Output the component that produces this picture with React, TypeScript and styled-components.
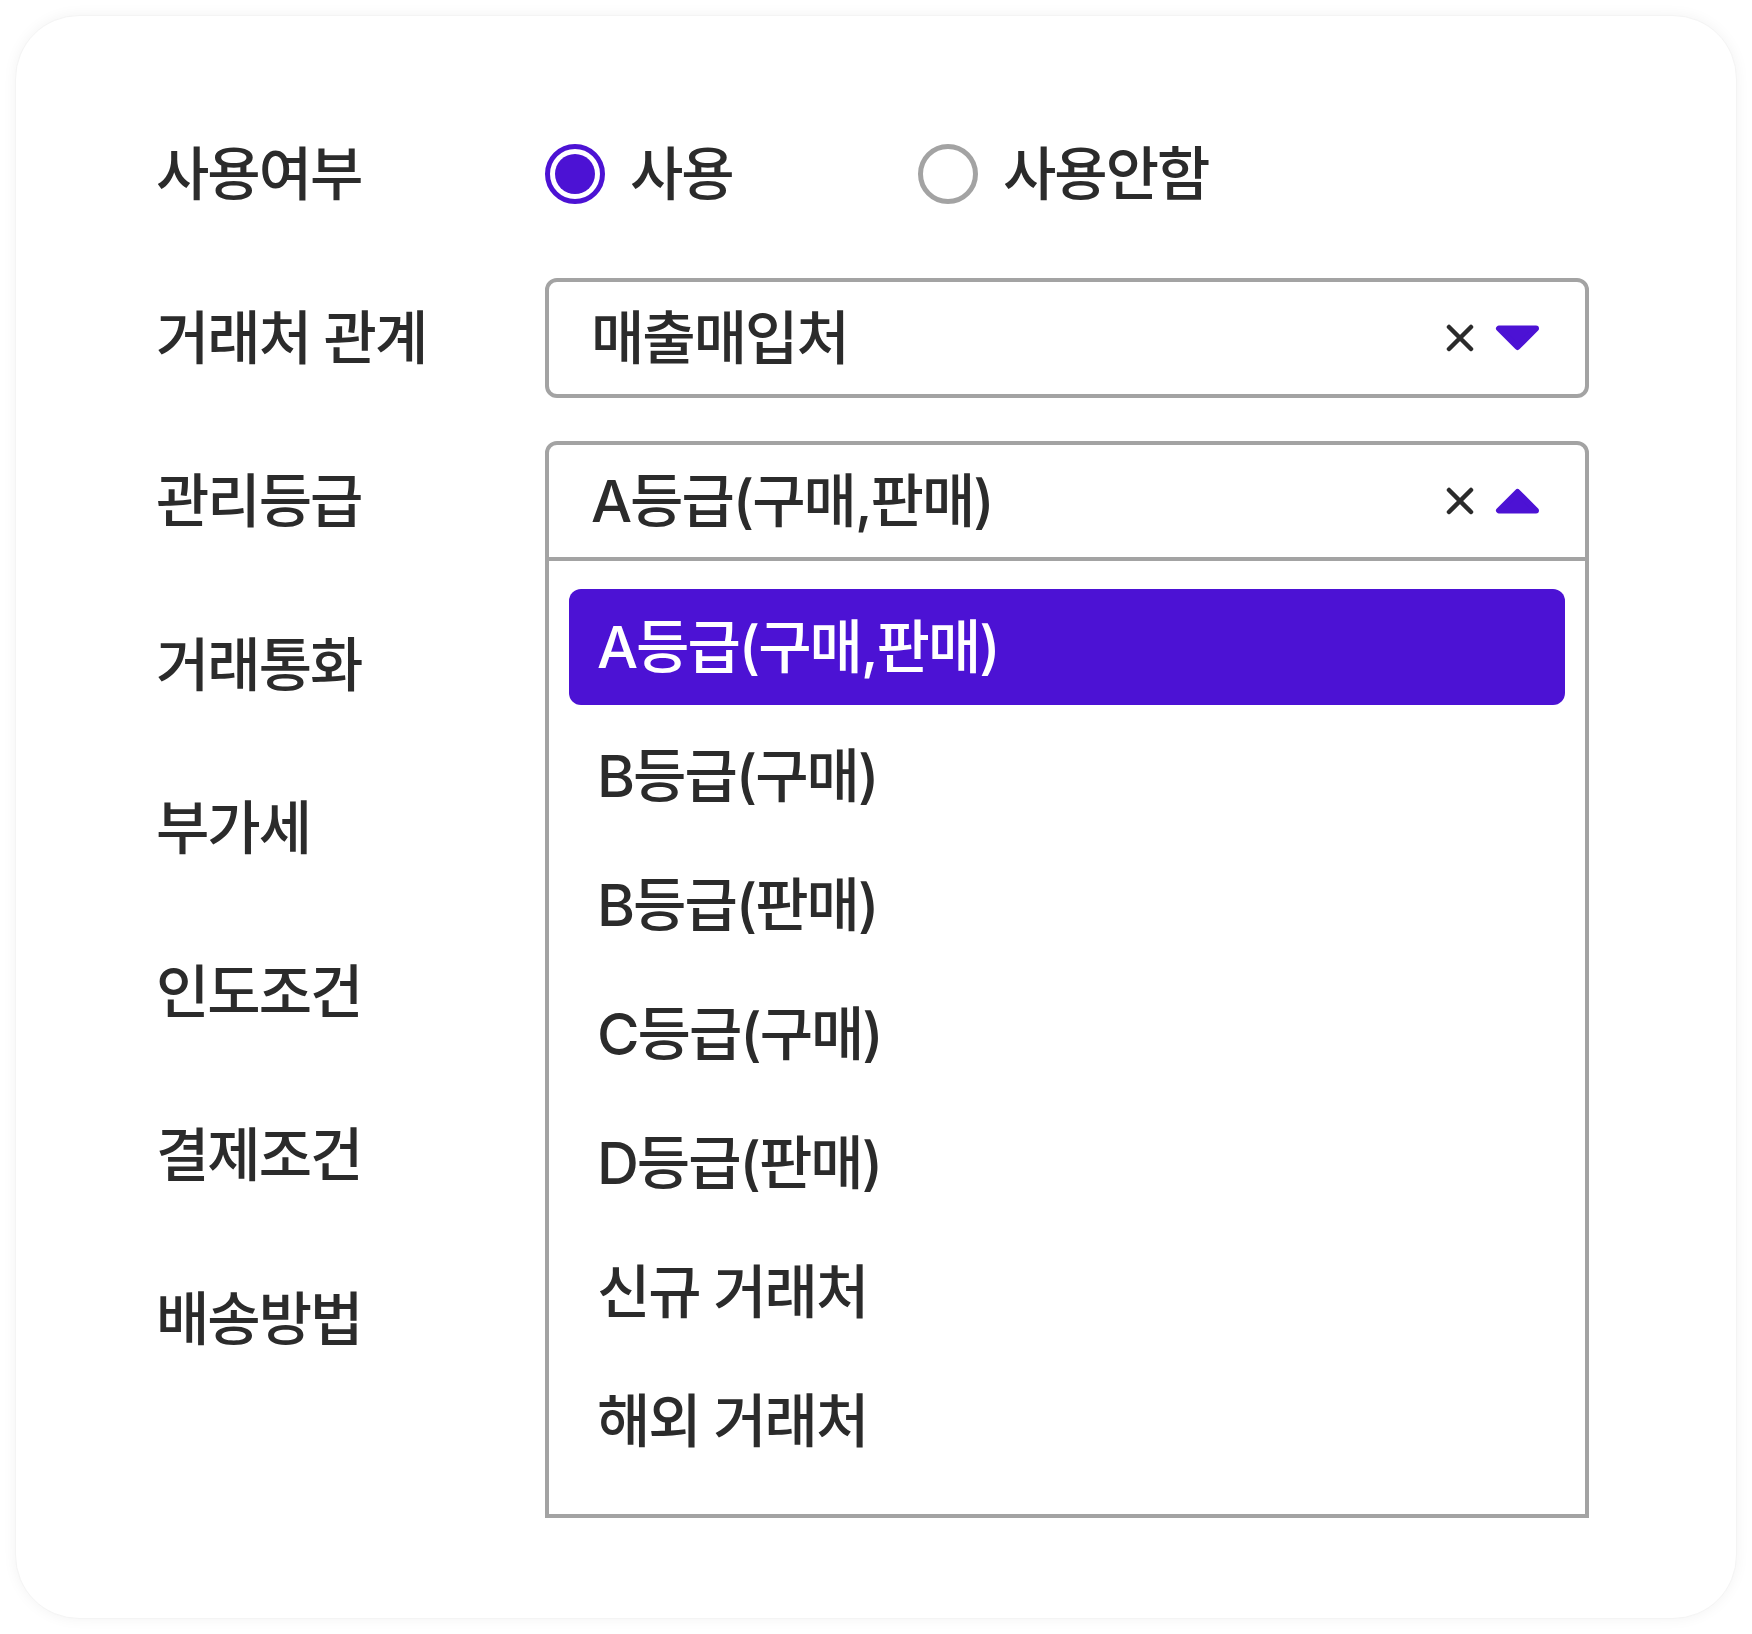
import React from "react";
import styled, { createGlobalStyle, css } from "styled-components";

const PURPLE = "#4c12d4";
const LINE = "#a3a3a3";
const INK = "#2b2b2b";
const TRACK = "-2px";

const Global = createGlobalStyle`
  html, body {
    margin: 0;
    padding: 0;
    background: #ffffff;
  }
  body {
    font-family: Inter, "Noto Sans CJK KR", "Noto Sans", sans-serif;
    color: ${INK};
    -webkit-font-smoothing: antialiased;
  }
  * { box-sizing: border-box; }
`;

const Page = styled.div`
  padding: 15px;
`;

const Card = styled.div`
  height: 1604px;
  background: #ffffff;
  border-radius: 64px;
  box-shadow: 0 0 14px rgba(0, 0, 0, 0.05);
  border: 1px solid #f4f4f4;
  padding: 98px 147px 0 140px;
`;

const Form = styled.div`
  display: flex;
  flex-direction: column;
  gap: 43.5px;
`;

const Row = styled.div`
  display: grid;
  grid-template-columns: 389px 1fr;
  align-items: center;
  height: 120px;
`;

const Label = styled.div`
  font-size: 58px;
  line-height: 1;
  font-weight: 500;
  letter-spacing: ${TRACK};
  color: ${INK};
  white-space: nowrap;
`;

const RadioGroup = styled.div`
  display: grid;
  grid-template-columns: repeat(2, 373px);
  align-items: center;
`;

const RadioOption = styled.label`
  display: flex;
  align-items: center;
  gap: 25px;
  cursor: pointer;
`;

const RadioCircle = styled.span<{ $checked?: boolean }>`
  width: 60px;
  height: 60px;
  border-radius: 50%;
  border: 5px solid ${(p) => (p.$checked ? PURPLE : LINE)};
  display: flex;
  align-items: center;
  justify-content: center;
  flex: none;
  ${(p) =>
    p.$checked &&
    css`
      &::after {
        content: "";
        width: 40px;
        height: 40px;
        border-radius: 50%;
        background: ${PURPLE};
      }
    `}
`;

const RadioText = styled.span`
  font-size: 58px;
  line-height: 1;
  font-weight: 500;
  letter-spacing: ${TRACK};
  color: ${INK};
`;

const SelectWrap = styled.div`
  position: relative;
  height: 120px;
`;

const SelectBox = styled.div<{ $open?: boolean }>`
  height: 120px;
  border: 4px solid ${LINE};
  border-radius: ${(p) => (p.$open ? "12px 12px 0 0" : "12px")};
  background: #fff;
  display: flex;
  align-items: center;
  justify-content: space-between;
  padding: 0 44px 0 42px;
`;

const SelectValue = styled.span`
  font-size: 58px;
  line-height: 1;
  font-weight: 500;
  letter-spacing: ${TRACK};
  color: ${INK};
  white-space: nowrap;
`;

const Controls = styled.div`
  display: flex;
  align-items: center;
  gap: 20px;
`;

const Menu = styled.div`
  position: absolute;
  top: 100%;
  left: 0;
  right: 0;
  z-index: 10;
  height: 957px;
  background: #fff;
  border: 4px solid ${LINE};
  border-top: none;
  padding: 28px 20px 0 20px;
  display: flex;
  flex-direction: column;
  gap: 13px;
`;

const Option = styled.div<{ $active?: boolean }>`
  height: 116px;
  flex: none;
  border-radius: 12px;
  display: flex;
  align-items: center;
  padding-left: 28px;
  font-size: 58px;
  line-height: 1;
  font-weight: 500;
  letter-spacing: ${TRACK};
  white-space: nowrap;
  color: ${(p) => (p.$active ? "#ffffff" : INK)};
  background: ${(p) => (p.$active ? PURPLE : "transparent")};
`;

const ClearIcon = () => (
  <svg width="28" height="28" viewBox="0 0 28 28" aria-hidden>
    <path
      d="M3 3 L25 25 M25 3 L3 25"
      stroke={INK}
      strokeWidth="4.5"
      strokeLinecap="round"
      fill="none"
    />
  </svg>
);

const Caret = ({ up }: { up?: boolean }) => (
  <svg width="47" height="26" viewBox="0 0 47 26" aria-hidden>
    <path
      d={up ? "M5 22.5 H42 L23.5 4 Z" : "M5 3.5 H42 L23.5 22 Z"}
      fill={PURPLE}
      stroke={PURPLE}
      strokeWidth="6"
      strokeLinejoin="round"
    />
  </svg>
);

const gradeOptions = [
  "A등급(구매,판매)",
  "B등급(구매)",
  "B등급(판매)",
  "C등급(구매)",
  "D등급(판매)",
  "신규 거래처",
  "해외 거래처",
];

const otherLabels = ["거래통화", "부가세", "인도조건", "결제조건", "배송방법"];

export default function App() {
  return (
    <>
      <Global />
      <Page>
        <Card>
          <Form>
            <Row>
              <Label>사용여부</Label>
              <RadioGroup>
                <RadioOption>
                  <RadioCircle $checked />
                  <RadioText>사용</RadioText>
                </RadioOption>
                <RadioOption>
                  <RadioCircle />
                  <RadioText>사용안함</RadioText>
                </RadioOption>
              </RadioGroup>
            </Row>
            <Row>
              <Label>거래처 관계</Label>
              <SelectWrap>
                <SelectBox>
                  <SelectValue>매출매입처</SelectValue>
                  <Controls>
                    <ClearIcon />
                    <Caret />
                  </Controls>
                </SelectBox>
              </SelectWrap>
            </Row>
            <Row>
              <Label>관리등급</Label>
              <SelectWrap>
                <SelectBox $open>
                  <SelectValue>A등급(구매,판매)</SelectValue>
                  <Controls>
                    <ClearIcon />
                    <Caret up />
                  </Controls>
                </SelectBox>
                <Menu>
                  {gradeOptions.map((o, i) => (
                    <Option key={o} $active={i === 0}>
                      {o}
                    </Option>
                  ))}
                </Menu>
              </SelectWrap>
            </Row>
            {otherLabels.map((l) => (
              <Row key={l}>
                <Label>{l}</Label>
                <div />
              </Row>
            ))}
          </Form>
        </Card>
      </Page>
    </>
  );
}
